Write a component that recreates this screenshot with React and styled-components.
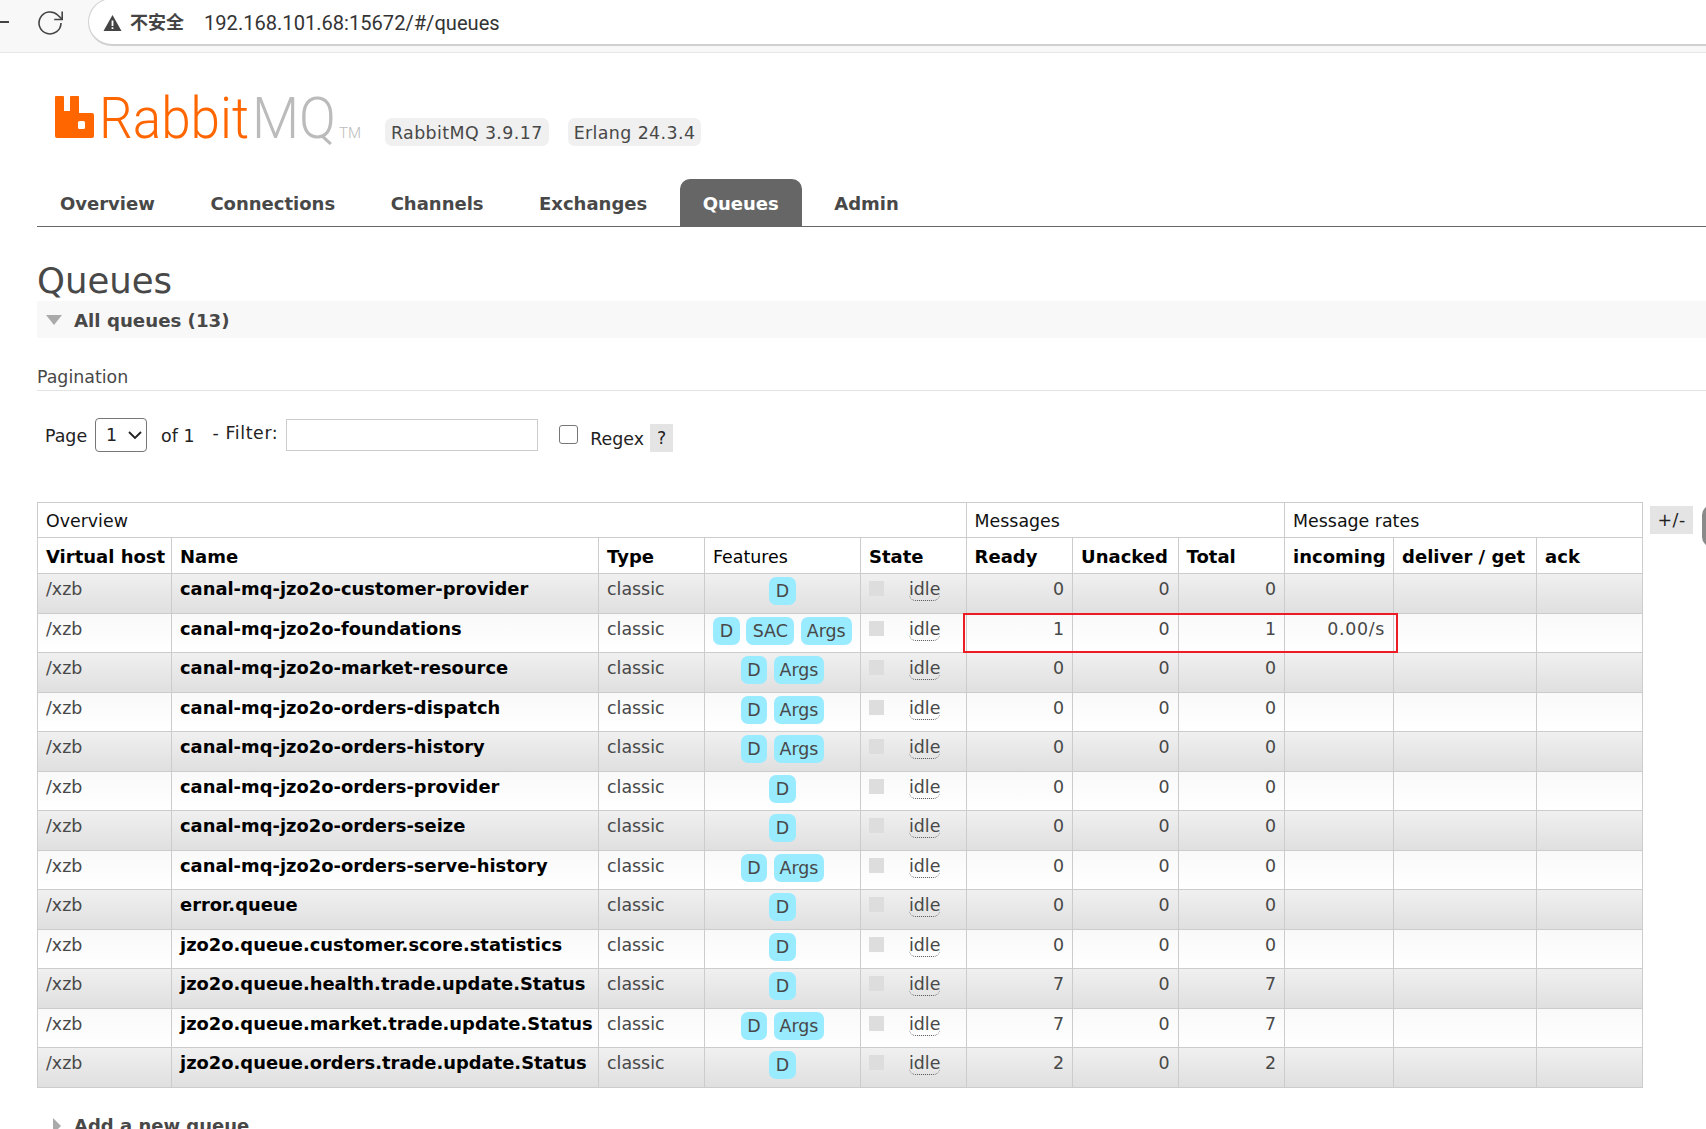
import React from 'react';
import styled, { createGlobalStyle } from 'styled-components';

const GlobalStyle = createGlobalStyle`
  html, body {
    margin: 0;
    height: 1129px;
    overflow: hidden;
    background: #fff;
  }
  body {
    font-family: "DejaVu Sans", Verdana, sans-serif;
    font-size: 17.4px;
    color: #484848;
  }
`;

const BrowserBar = styled.div`
  height: 52px;
  background: #f8f8f8;
  border-bottom: 1px solid #e8e8e8;
  display: flex;
  align-items: flex-start;
  overflow: hidden;
`;

const BackStub = styled.div`
  flex: none;
  width: 9px;
  height: 2px;
  background: #444;
  margin-top: 21px;
`;

const ReloadIcon = styled.svg`
  width: 26px;
  height: 26px;
  margin: 10px 0 0 29px;
  flex: none;
`;

const Omnibox = styled.div`
  flex: none;
  width: 1700px;
  height: 48px;
  margin: -2px 0 0 24px;
  padding: 2px 0 0 14px;
  box-sizing: border-box;
  background: #fff;
  border: 1.5px solid #d0d0d0;
  border-bottom-width: 2px;
  border-radius: 24px;
  display: flex;
  align-items: center;
`;

const WarnIcon = styled.svg`
  width: 19px;
  height: 18px;
  flex: none;
`;

const NotSecure = styled.span`
  font-family: "Noto Sans CJK SC", sans-serif;
  font-weight: 700;
  font-size: 18px;
  color: #444;
  margin: -3px 0 0 8px;
`;

const Url = styled.span`
  font-family: Roboto, sans-serif;
  font-size: 20.1px;
  color: #333;
  margin-left: 20px;
`;

const Header = styled.div`
  display: flex;
  margin: 43px 0 0 55px;
  height: 83px;
`;

const Logo = styled.svg`
  width: 306px;
  height: 46px;
  flex: none;
  overflow: visible;
`;

const VersionBadge = styled.span`
  height: 28px;
  line-height: 30px;
  margin: 22px 0 0 ${(p) => p.$gap}px;
  padding: 0 6px;
  letter-spacing: 0.4px;
  background: #f0f0f0;
  border-radius: 7px;
`;

const Main = styled.div`
  padding-left: 37px;
`;

const Nav = styled.nav`
  display: flex;
  height: 47px;
  border-bottom: 1px solid #666;
`;

const Tab = styled.a`
  padding: 0 23px;
  margin-right: 9.5px;
  line-height: 49px;
  font-size: 18px;
  font-weight: 700;
  color: ${(p) => (p.$active ? '#fff' : '#484848')};
  background: ${(p) => (p.$active ? '#666' : 'transparent')};
  border-radius: 10px 10px 0 0;
`;

const Title = styled.h1`
  margin: 0;
  padding-top: 30px;
  height: 44px;
  line-height: 47px;
  font-size: 35.5px;
  font-weight: 400;
  color: #484848;
`;

const SectionBar = styled.div`
  height: 36px;
  background: #f8f8f8;
  display: flex;
  align-items: center;
  padding: 1px 0 0 9px;
  font-size: 18.2px;
  font-weight: 700;
`;

const ArrowDown = styled.span`
  border-left: 8.5px solid transparent;
  border-right: 8.5px solid transparent;
  border-top: 10px solid #aaa;
  margin-right: 12px;
`;

const PaginationTitle = styled.h3`
  margin: 26px 0 0;
  height: 26px;
  line-height: 26px;
  font-size: 17.4px;
  font-weight: 400;
  color: #484848;
  border-bottom: 1px solid #e4e4e4;
`;

const FilterRow = styled.div`
  display: flex;
  align-items: flex-start;
  height: 84px;
  margin-top: 27px;
  padding-left: 8px;
  color: #222;
`;

const RowLabel = styled.label`
  line-height: 24px;
  letter-spacing: ${(p) => p.$spacing || 0}px;
  margin: ${(p) => p.$top}px ${(p) => p.$right}px 0 ${(p) => p.$left}px;
`;

const SelectWrap = styled.span`
  position: relative;
  display: block;
  width: 52px;
  height: 34px;
`;

const PageSelect = styled.select`
  appearance: none;
  display: block;
  width: 100%;
  height: 100%;
  font: inherit;
  color: #222;
  background: #fff;
  border: 1px solid #767676;
  border-radius: 4px;
  padding-left: 10px;
`;

const SelectChevron = styled.svg`
  position: absolute;
  right: 4px;
  top: 12px;
  width: 16px;
  height: 10px;
  pointer-events: none;
`;

const FilterInput = styled.input`
  width: 252px;
  height: 32px;
  box-sizing: border-box;
  margin: 1px 0 0;
  border: 1px solid #ccc;
  background: #fff;
`;

const RegexCheck = styled.input`
  appearance: none;
  width: 19px;
  height: 19px;
  margin: 7px 12px 0 21px;
  background: #fff;
  border: 1.5px solid #767676;
  border-radius: 3px;
`;

const HelpBox = styled.span`
  width: 23px;
  height: 28px;
  line-height: 28px;
  margin: 6px 0 0 6px;
  text-align: center;
  background: #e4e4e4;
  color: #222;
`;

const TableRow = styled.div`
  display: flex;
  align-items: flex-start;
  position: relative;
`;

const QueueTable = styled.table`
  width: 1605px;
  flex: none;
  table-layout: fixed;
  border-collapse: collapse;
`;

const GroupHead = styled.th`
  height: 35px;
  padding: 2px 8px 0;
  box-sizing: border-box;
  text-align: left;
  font-weight: 400;
  color: #111;
  border: 1px solid #ccc;
`;

const ColHead = styled.th`
  height: 36px;
  padding: 2px 8px 0;
  box-sizing: border-box;
  text-align: left;
  font-size: ${(p) => (p.$plain ? '17.4px' : '18px')};
  font-weight: ${(p) => (p.$plain ? 400 : 700)};
  color: #000;
  white-space: nowrap;
  border: 1px solid #ccc;
`;

const DataRow = styled.tr`
  height: 39.5px;
  background: ${(p) =>
    p.$alt
      ? 'linear-gradient(#f9f9f9, #ffffff)'
      : 'linear-gradient(#f0f0f0, #dfdfdf)'};
`;

const Cell = styled.td`
  padding: 1px 8px 0;
  line-height: 28px;
  vertical-align: top;
  white-space: nowrap;
  border: 1px solid #ccc;
  text-align: ${(p) => p.$align || 'left'};
  font-size: ${(p) => (p.$bold ? '17.9px' : '17.4px')};
  font-weight: ${(p) => (p.$bold ? 700 : 400)};
  color: ${(p) => (p.$bold ? '#000' : '#484848')};
`;

const Rate = styled.span`
  letter-spacing: 0.7px;
`;

const Feature = styled.span`
  display: inline-block;
  vertical-align: top;
  height: 28px;
  margin-top: 2px;
  padding: 0 ${(p) => (p.$tight ? 6 : 6.5)}px;
  background: #99ebff;
  border-radius: 7px;

  & + & {
    margin-left: 6.5px;
  }
`;

const StateBox = styled.div`
  display: flex;
  align-items: flex-start;
`;

const StateMark = styled.span`
  width: 15px;
  height: 15px;
  margin: 6px 25px 0 0;
  background: #dddddd;
`;

const Idle = styled.span`
  line-height: 24px;
  height: 23px;
  margin-top: 2px;
  border-bottom: 1px dotted #555;
  border-radius: 0 0 7px 7px;
`;

const ToggleColumns = styled.span`
  flex: none;
  width: 43px;
  height: 28px;
  margin: 4px 0 0 7px;
  line-height: 28px;
  letter-spacing: 0.5px;
  text-align: center;
  background: #e4e4e4;
  color: #222;
`;

const EdgeHandle = styled.span`
  flex: none;
  width: 20px;
  height: 42px;
  margin: 3px 0 0 9px;
  background: #8a8a8a;
  border-radius: 10px 0 0 10px;
`;

// the red rectangle someone drew on the screenshot
const Highlight = styled.div`
  position: absolute;
  left: 926px;
  top: 111px;
  width: 435px;
  height: 40px;
  box-sizing: border-box;
  border: 2px solid #ed1c24;
  pointer-events: none;
`;

const AddQueue = styled.div`
  display: flex;
  align-items: center;
  height: 24px;
  margin-top: 26px;
  padding-left: 16px;
  font-size: 18px;
  font-weight: 700;
`;

const ArrowRight = styled.span`
  border-top: 8.5px solid transparent;
  border-bottom: 8.5px solid transparent;
  border-left: 8px solid #aaa;
  margin-right: 13px;
`;

const navItems = ['Overview', 'Connections', 'Channels', 'Exchanges', 'Queues', 'Admin'];

const colWidths = [134, 427, 106, 156, 105.5, 106.5, 105.5, 106.5, 109, 143, 106];

const queues = [
  ['canal-mq-jzo2o-customer-provider', ['D'], 0, 0, 0],
  ['canal-mq-jzo2o-foundations', ['D', 'SAC', 'Args'], 1, 0, 1, '0.00/s'],
  ['canal-mq-jzo2o-market-resource', ['D', 'Args'], 0, 0, 0],
  ['canal-mq-jzo2o-orders-dispatch', ['D', 'Args'], 0, 0, 0],
  ['canal-mq-jzo2o-orders-history', ['D', 'Args'], 0, 0, 0],
  ['canal-mq-jzo2o-orders-provider', ['D'], 0, 0, 0],
  ['canal-mq-jzo2o-orders-seize', ['D'], 0, 0, 0],
  ['canal-mq-jzo2o-orders-serve-history', ['D', 'Args'], 0, 0, 0],
  ['error.queue', ['D'], 0, 0, 0],
  ['jzo2o.queue.customer.score.statistics', ['D'], 0, 0, 0],
  ['jzo2o.queue.health.trade.update.Status', ['D'], 7, 0, 7],
  ['jzo2o.queue.market.trade.update.Status', ['D', 'Args'], 7, 0, 7],
  ['jzo2o.queue.orders.trade.update.Status', ['D'], 2, 0, 2],
];

const App = () => (
  <>
    <GlobalStyle />
    <BrowserBar>
      <BackStub />
      <ReloadIcon viewBox="0 0 26 26" fill="none" stroke="#444" strokeWidth="1.6">
        <path d="M23 13a11 11 0 1 1-3.4-8L24 9.2" />
        <path d="M24.2 1.5v8h-8" />
      </ReloadIcon>
      <Omnibox>
        <WarnIcon viewBox="0 0 19 18">
          <path d="M9.5 1 18.5 17H.5z" fill="#444" />
          <path d="M8.6 6.5h1.8v5.5H8.600zM8.600 13.200h1.800v1.800H8.600z" fill="#fff" />
        </WarnIcon>
        <NotSecure>不安全</NotSecure>
        <Url>192.168.101.68:15672/#/queues</Url>
      </Omnibox>
    </BrowserBar>

    <Header>
      <Logo viewBox="0 0 306 46">
        <path
          d="M1 0h7a1 1 0 0 1 1 1v14h6V1a1 1 0 0 1 1-1h7a1 1 0 0 1 1 1v16h13a2 2 0 0 1 2 2v21a2 2 0 0 1-2 2H2a2 2 0 0 1-2-2V1a1 1 0 0 1 1-1zM24.500 25a1.500 1.500 0 0 0-1.500 1.500v5a1.500 1.500 0 0 0 1.500 1.500h4a1.500 1.500 0 0 0 1.500-1.500v-5a1.500 1.500 0 0 0-1.500-1.500z"
          fill="#ff6600"
          fillRule="evenodd"
        />
        <text x="44" y="42" fontFamily="Roboto" fontWeight="300" fontSize="58" fill="#ff6600" textLength="150" lengthAdjust="spacingAndGlyphs">Rabbit</text>
        <text x="197" y="42" fontFamily="Roboto" fontWeight="300" fontSize="58" fill="#bbbbbb" textLength="84" lengthAdjust="spacingAndGlyphs">MQ</text>
        <text x="284" y="42" fontFamily="Roboto" fontWeight="300" fontSize="15.5" fill="#bbbbbb" textLength="22" lengthAdjust="spacingAndGlyphs">TM</text>
      </Logo>
      <VersionBadge $gap={24}>RabbitMQ 3.9.17</VersionBadge>
      <VersionBadge $gap={19}>Erlang 24.3.4</VersionBadge>
    </Header>

    <Main>
      <Nav>
        {navItems.map((item) => (
          <Tab key={item} $active={item === 'Queues'}>{item}</Tab>
        ))}
      </Nav>

      <Title>Queues</Title>
      <SectionBar>
        <ArrowDown />
        All queues (13)
      </SectionBar>

      <PaginationTitle>Pagination</PaginationTitle>
      <FilterRow>
        <RowLabel $top={6} $left={0} $right={8}>Page</RowLabel>
        <SelectWrap>
          <PageSelect defaultValue="1">
            <option value="1">1</option>
          </PageSelect>
          <SelectChevron viewBox="0 0 16 10" fill="none" stroke="#222" strokeWidth="1.8">
            <path d="M2 2l6 6 6-6" />
          </SelectChevron>
        </SelectWrap>
        <RowLabel $top={6} $left={14} $right={18}>of 1</RowLabel>
        <RowLabel $top={3} $left={0} $right={8} $spacing={0.6}>- Filter:</RowLabel>
        <FilterInput type="text" />
        <RegexCheck type="checkbox" />
        <RowLabel $top={9} $left={0} $right={0}>Regex</RowLabel>
        <HelpBox>?</HelpBox>
      </FilterRow>

      <TableRow>
        <QueueTable>
          <colgroup>
            {colWidths.map((w, i) => (
              <col key={i} width={w} />
            ))}
          </colgroup>
          <thead>
            <tr>
              <GroupHead colSpan={5}>Overview</GroupHead>
              <GroupHead colSpan={3}>Messages</GroupHead>
              <GroupHead colSpan={3}>Message rates</GroupHead>
            </tr>
            <tr>
              <ColHead>Virtual host</ColHead>
              <ColHead>Name</ColHead>
              <ColHead>Type</ColHead>
              <ColHead $plain>Features</ColHead>
              <ColHead>State</ColHead>
              <ColHead>Ready</ColHead>
              <ColHead>Unacked</ColHead>
              <ColHead>Total</ColHead>
              <ColHead>incoming</ColHead>
              <ColHead>deliver / get</ColHead>
              <ColHead>ack</ColHead>
            </tr>
          </thead>
          <tbody>
            {queues.map(([name, features, ready, unacked, total, incoming], i) => (
              <DataRow key={name} $alt={i % 2 === 1}>
                <Cell>/xzb</Cell>
                <Cell $bold>{name}</Cell>
                <Cell>classic</Cell>
                <Cell $align="center">
                  {features.map((f) => (
                    <Feature key={f} $tight={f === 'Args'}>{f}</Feature>
                  ))}
                </Cell>
                <Cell>
                  <StateBox>
                    <StateMark />
                    <Idle>idle</Idle>
                  </StateBox>
                </Cell>
                <Cell $align="right">{ready}</Cell>
                <Cell $align="right">{unacked}</Cell>
                <Cell $align="right">{total}</Cell>
                <Cell $align="right"><Rate>{incoming}</Rate></Cell>
                <Cell />
                <Cell />
              </DataRow>
            ))}
          </tbody>
        </QueueTable>
        <ToggleColumns>+/-</ToggleColumns>
        <EdgeHandle />
        <Highlight />
      </TableRow>

      <AddQueue>
        <ArrowRight />
        Add a new queue
      </AddQueue>
    </Main>
  </>
);

export default App;
